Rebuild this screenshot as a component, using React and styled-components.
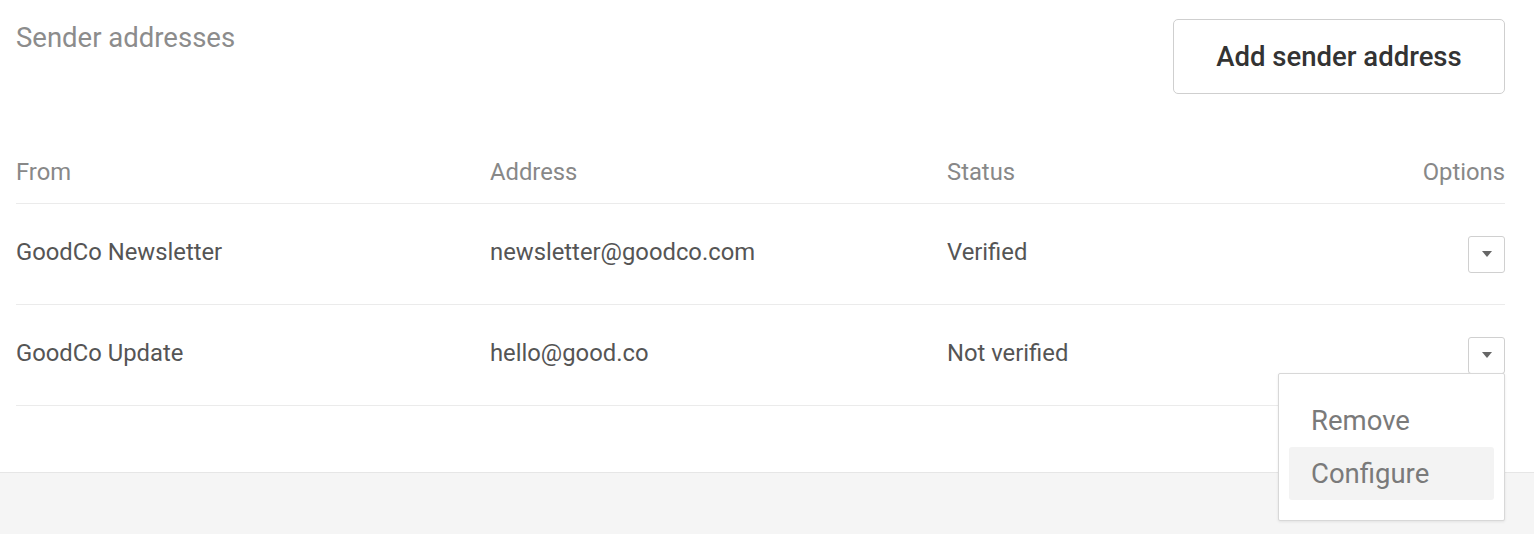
import React from 'react';
import styled, { createGlobalStyle } from 'styled-components';

const GlobalStyle = createGlobalStyle`
  html, body {
    margin: 0;
    padding: 0;
    background: #fff;
    font-family: Roboto, "Helvetica Neue", Arial, sans-serif;
  }
`;

const Page = styled.div`
  display: flex;
  flex-direction: column;
  min-height: 534px;
`;

const Content = styled.section`
  padding: 19px 29px 0 16px;
  height: 472px;
  box-sizing: border-box;
`;

const TopBar = styled.header`
  display: flex;
  justify-content: space-between;
  align-items: flex-start;
`;

const Title = styled.h2`
  margin: 2px 0 0;
  font-size: 27.5px;
  font-weight: 400;
  line-height: 33px;
  color: #8c8c8c;
`;

const AddButton = styled.button`
  width: 332px;
  height: 75px;
  border: 1px solid #cfcfcf;
  border-radius: 5px;
  background: #fff;
  font-family: inherit;
  font-size: 27.5px;
  font-weight: 500;
  color: #333;
  cursor: pointer;
`;

const Table = styled.div`
  margin-top: 47px;
`;

const Row = styled.div`
  display: grid;
  grid-template-columns: 474px 457px 1fr auto;
  align-items: center;
  height: ${p => (p.head ? '62px' : '100px')};
  border-bottom: 1px solid #ebebeb;
`;

const Cell = styled.div`
  font-size: 23.8px;
  line-height: 28px;
  margin-bottom: ${p => (p.head ? '0' : '5px')};
  color: ${p => (p.head ? '#888' : '#555')};
  text-align: ${p => (p.right ? 'right' : 'left')};
`;

const OptionsWrap = styled.div`
  position: relative;
  display: flex;
  justify-content: flex-end;
`;

const CaretButton = styled.button`
  width: 37px;
  height: 37px;
  padding: 0;
  border: 1px solid #d0d0d0;
  border-radius: 3px;
  background: #fff;
  display: flex;
  align-items: center;
  justify-content: center;
  cursor: pointer;

  &::after {
    content: '';
    border-left: 5px solid transparent;
    border-right: 5px solid transparent;
    border-top: 6px solid #666;
  }
`;

const Menu = styled.ul`
  position: absolute;
  top: 36px;
  right: 0;
  width: 227px;
  box-sizing: border-box;
  margin: 0;
  padding: 20px 10px;
  list-style: none;
  background: #fff;
  border: 1px solid #d8d8d8;
  border-radius: 2px;
  box-shadow: 0 1px 3px rgba(0, 0, 0, 0.08);
  z-index: 2;
`;

const MenuItem = styled.li`
  height: 53px;
  display: flex;
  align-items: center;
  padding-left: 22px;
  font-size: 27.5px;
  color: #7a7a7a;
  border-radius: 3px;
  background: ${p => (p.active ? '#f3f3f3' : 'transparent')};
`;

const Footer = styled.footer`
  flex: 1;
  background: #f5f5f5;
  border-top: 1px solid #e6e6e6;
`;

const senders = [
  { from: 'GoodCo Newsletter', address: 'newsletter@goodco.com', status: 'Verified' },
  { from: 'GoodCo Update', address: 'hello@good.co', status: 'Not verified', open: true },
];

export default function App() {
  return (
    <>
      <GlobalStyle />
      <Page>
        <Content>
          <TopBar>
            <Title>Sender addresses</Title>
            <AddButton>Add sender address</AddButton>
          </TopBar>
          <Table>
            <Row head>
              <Cell head>From</Cell>
              <Cell head>Address</Cell>
              <Cell head>Status</Cell>
              <Cell head right>Options</Cell>
            </Row>
            {senders.map(s => (
              <Row key={s.address}>
                <Cell>{s.from}</Cell>
                <Cell>{s.address}</Cell>
                <Cell>{s.status}</Cell>
                <OptionsWrap>
                  <CaretButton aria-label="Options" />
                  {s.open && (
                    <Menu>
                      <MenuItem>Remove</MenuItem>
                      <MenuItem active>Configure</MenuItem>
                    </Menu>
                  )}
                </OptionsWrap>
              </Row>
            ))}
          </Table>
        </Content>
        <Footer />
      </Page>
    </>
  );
}
